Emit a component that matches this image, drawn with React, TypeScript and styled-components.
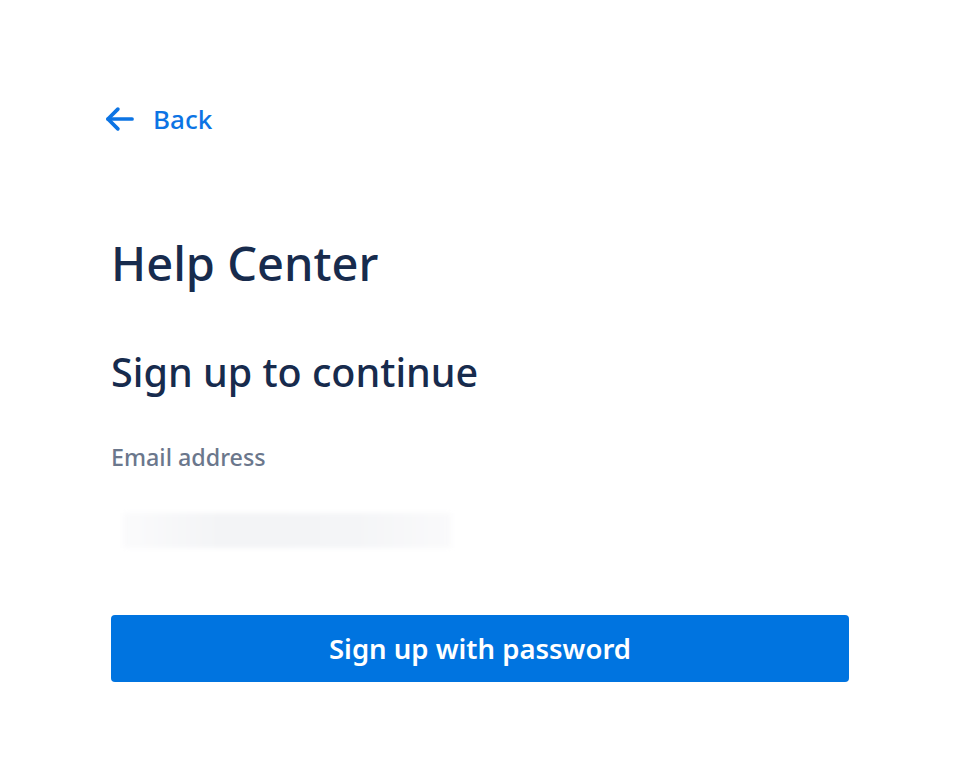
import React from "react";
import styled, { createGlobalStyle } from "styled-components";

const GlobalStyle = createGlobalStyle`
  html, body {
    margin: 0;
    padding: 0;
    background: #ffffff;
    font-family: "Noto Sans", "Open Sans", "Liberation Sans", sans-serif;
  }
`;

const Page = styled.div`
  width: 966px;
  height: 770px;
  box-sizing: border-box;
  padding: 99px 117px 0 111px;
  display: flex;
  flex-direction: column;
`;

const BackLink = styled.a`
  display: flex;
  align-items: center;
  gap: 16px;
  margin-left: -8px;
  color: #0c74e4;
  font-size: 26px;
  font-weight: 500;
  text-decoration: none;
  cursor: pointer;
  height: 40px;
`;

const Title = styled.h1`
  margin: 94px 0 0;
  color: #172b4d;
  font-size: 47px;
  font-weight: 500;
  line-height: 60px;
`;

const Subtitle = styled.h2`
  margin: 53px 0 0;
  color: #172b4d;
  font-size: 39.5px;
  font-weight: 500;
  line-height: 52px;
`;

const Label = styled.label`
  margin-top: 44px;
  color: #6b778c;
  font-size: 23.3px;
  font-weight: 500;
  line-height: 30px;
`;

const BlurredField = styled.div`
  margin: 41px 0 0 12px;
  width: 328px;
  height: 35px;
  background: linear-gradient(90deg, #fbfbfc 0%, #f3f4f6 30%, #f4f5f7 70%, #fafafb 100%);
  filter: blur(2px);
`;

const PrimaryButton = styled.button`
  margin-top: 67px;
  width: 738px;
  height: 67px;
  border: none;
  border-radius: 4px;
  background: #0074e0;
  color: #ffffff;
  font-family: inherit;
  font-size: 27.5px;
  font-weight: 600;
  cursor: pointer;
`;

export default function App() {
  return (
    <>
      <GlobalStyle />
      <Page>
        <BackLink>
          <svg width="34" height="34" viewBox="0 0 24 24" fill="none" stroke="currentColor" strokeWidth="2.6" strokeLinecap="round" strokeLinejoin="round">
            <path d="M20.5 12H3.5" />
            <path d="M10.5 5l-7 7 7 7" />
          </svg>
          Back
        </BackLink>
        <Title>Help Center</Title>
        <Subtitle>Sign up to continue</Subtitle>
        <Label>Email address</Label>
        <BlurredField />
        <PrimaryButton>Sign up with password</PrimaryButton>
      </Page>
    </>
  );
}
